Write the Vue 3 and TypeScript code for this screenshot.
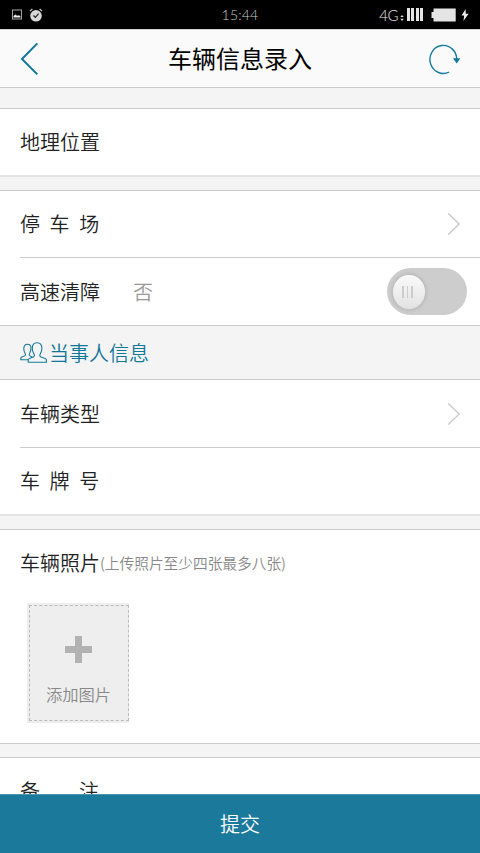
<script setup lang="ts">
import { ref } from 'vue'

const towing = ref<boolean>(false)
const signalBars: number[] = [0, 1, 2, 3]
</script>

<template>
  <div class="screen">
    <div class="status">
      <div class="status-side">
        <svg class="pic" width="12" height="12" viewBox="0 0 12 12">
          <rect x="0.5" y="1" width="9" height="9" fill="none" stroke="#a5a5a5" />
          <path d="M1.5 8.5V7L3.5 5.6L5 6.8L7 6.2L8.5 7.4V8.5Z" fill="#eee" />
        </svg>
        <svg class="alarm" width="14" height="14" viewBox="0 0 14 14">
          <circle cx="7" cy="7.8" r="5.8" fill="#d6d6d6" />
          <path d="M1 3L3.4 1M10.6 1L13 3" stroke="#bbb" stroke-width="1.3" />
          <path d="M4.4 7.5L6.4 9.3L9.6 5.7" fill="none" stroke="#222" stroke-width="1.2" />
        </svg>
      </div>
      <div class="clock">15:44</div>
      <div class="status-side right">
        <span class="net">4G</span>
        <svg class="data" width="4" height="6" viewBox="0 0 4 6"><path d="M0.3 2L2 0L3.7 2ZM0.3 3.8H3.7L2 6Z" fill="#ddd" /></svg>
        <span class="signal"><i v-for="bar in signalBars" :key="bar"></i></span>
        <svg class="battery" width="25" height="14" viewBox="0 0 25 14">
          <path d="M2.5 0.5H24.7V13.5H2.5V10H0.5V4H2.5Z" fill="#e4e4e4" />
        </svg>
        <svg class="bolt" width="8" height="12" viewBox="0 0 8 12"><path d="M4.7 0L0.5 6.6H3.2L2.4 12L7.6 4.7H4.7Z" fill="#eee" /></svg>
      </div>
    </div>

    <header class="header">
      <svg width="20" height="34" viewBox="0 0 20 34"><path d="M17.3 1.4L2 17L17.3 32.4" fill="none" stroke="#11779a" stroke-width="2" /></svg>
      <h1>车辆信息录入</h1>
      <svg class="refresh" width="34" height="32" viewBox="0 0 34 32">
        <path d="M21.2 29A13.4 14 0 1 1 28.7 17" fill="none" stroke="#147a9c" stroke-width="1.4" />
        <path d="M25 15.3H32.3L28.7 20.5Z" fill="#11779a" />
      </svg>
    </header>

    <main class="content">
      <div class="gap top"></div>
      <section class="group soft">
        <div class="row"><span class="label">地理位置</span></div>
      </section>
      <div class="gap"></div>
      <section class="group">
        <div class="row divided">
          <span class="label spread">停车场</span>
          <svg class="chevron" width="14" height="24" viewBox="0 0 14 24"><path d="M1.3 1.5L12.2 12L1.3 22.5" fill="none" stroke="#c8c8c8" stroke-width="1.3" /></svg>
        </div>
        <div class="row">
          <span class="label">高速清障</span>
          <span class="value">{{ towing ? '是' : '否' }}</span>
          <button class="switch" :class="{ on: towing }" @click="towing = !towing">
            <span class="knob"><i></i><i></i><i></i></span>
          </button>
        </div>
      </section>
      <div class="caption">
        <svg width="28" height="22" viewBox="0 0 28 22" fill="none" stroke="#13799b" stroke-width="1.1">
          <path d="M8 17.7H0.8V16C1.3 14.5 5.3 14.6 5.5 13C5.7 11.5 3.7 10.3 3.8 6.5C3.8 3.8 5.3 2.2 7.4 2.2C9.6 2.2 11 3.6 11 6" />
          <path d="M8.2 20.3V17.7C8.9 15.5 14 16 14.4 13.8C14.6 12 12.3 10.3 12.3 6.5C12.3 2.8 14 0.7 17 0.7C20 0.7 21.9 2.8 21.9 6.5C21.9 10.3 19.6 12 19.8 13.8C20.2 16 25.8 15.5 26.4 17.7V20.3Z" />
          <path d="M11 6C11 10.3 9 11.5 9.2 13C9.4 14.3 11.4 14.4 12.3 15" />
        </svg>
        <span>当事人信息</span>
      </div>
      <section class="group soft">
        <div class="row divided">
          <span class="label">车辆类型</span>
          <svg class="chevron" width="14" height="24" viewBox="0 0 14 24"><path d="M1.3 1.5L12.2 12L1.3 22.5" fill="none" stroke="#c8c8c8" stroke-width="1.3" /></svg>
        </div>
        <div class="row"><span class="label spread">车牌号</span></div>
      </section>
      <div class="gap"></div>
      <section class="group photos">
        <div class="row"><span class="label">车辆照片</span><span class="hint">(上传照片至少四张最多八张)</span></div>
        <div class="add">
          <div class="add-inner">
            <svg width="27" height="27" viewBox="0 0 27 27"><path d="M10 0H17V10H27V17H17V27H10V17H0V10H10Z" fill="#b2b2b2" /></svg>
            <span>添加图片</span>
          </div>
        </div>
      </section>
      <div class="gap"></div>
      <section class="group">
        <div class="row last"><span class="label wide">备注</span></div>
      </section>
    </main>
    <button class="submit">提交</button>
  </div>
</template>

<style>
body {
  overflow: hidden;
}
</style>

<style scoped>
.screen {
  box-sizing: border-box;
  width: 480px;
  height: 853px;
  display: flex;
  flex-direction: column;
  overflow: hidden;
  background: #f4f4f4;
  color: #222;
  font-family: "Noto Sans CJK SC", sans-serif;
  font-size: 20px;
  font-weight: 350;
}
svg {
  display: block;
  flex: none;
}
.status {
  flex: none;
  height: 29px;
  display: grid;
  grid-template-columns: 1fr auto 1fr;
  align-items: center;
  background: #000;
  color: #ccc;
}
.status-side {
  display: flex;
  align-items: center;
  padding-left: 12px;
}
.alarm {
  margin-left: 5px;
}
.clock {
  font-family: Lato, sans-serif;
  font-weight: 300;
  font-size: 14px;
  letter-spacing: 0.2px;
}
.right {
  justify-content: flex-end;
  padding: 0 11px 0 0;
}
.net {
  font-family: Lato, sans-serif;
  font-size: 15px;
  line-height: 20px;
  letter-spacing: -0.5px;
  color: #eee;
}
.data {
  margin: 7px 3px 0 1.5px;
}
.signal {
  display: flex;
  gap: 1.5px;
}
.signal i {
  width: 3px;
  height: 13px;
  background: #e4e4e4;
}
.battery {
  margin: 0 5px 0 8px;
}
.header {
  box-sizing: border-box;
  flex: none;
  height: 59px;
  display: flex;
  align-items: center;
  justify-content: space-between;
  padding: 0 18px 0 20px;
  background: #fafafa;
  border-top: 1px solid #d0d0d0;
  border-bottom: 1px solid #ccc;
}
h1 {
  margin: -2px 0 0 12px;
  font-size: 24px;
  font-weight: 400;
  line-height: 36px;
  color: #000;
}
.content {
  flex: 1;
  min-height: 0;
  overflow: hidden;
}
.gap {
  height: 13px;
}
.gap.top {
  height: 20px;
}
.group {
  background: #fff;
  border-top: 1px solid #ccc;
  border-bottom: 1px solid #ccc;
}
.soft {
  border-bottom: 2px solid #e3e3e3;
}
.row {
  box-sizing: border-box;
  height: 67px;
  display: flex;
  align-items: center;
  margin-left: 20px;
  padding-right: 13px;
}
.soft .row:last-child {
  height: 66px;
}
.row.divided {
  border-bottom: 1px solid #ccc;
}
.soft .row.divided {
  height: 68px;
}
.label {
  flex: none;
  line-height: 30px;
}
.spread {
  letter-spacing: 9.6px;
}
.wide {
  letter-spacing: 39px;
}
.value {
  margin-left: 33px;
  color: #999;
}
.chevron {
  margin-left: auto;
  margin-right: 6px;
}
.switch {
  box-sizing: border-box;
  width: 80px;
  height: 47px;
  margin-left: auto;
  padding: 0 6px;
  display: flex;
  align-items: center;
  border: 0;
  border-radius: 24px;
  background: #cdcdcd;
}
.switch.on {
  justify-content: flex-end;
}
.knob {
  box-sizing: border-box;
  width: 32px;
  height: 34px;
  padding-right: 3px;
  display: flex;
  align-items: center;
  justify-content: center;
  gap: 3px;
  border-radius: 50%;
  background: linear-gradient(#fafafa, #e2e2e2);
  box-shadow: 0 0 3px 2px #bdbdbd;
}
.knob i {
  width: 1.5px;
  height: 12px;
  background: #ccc;
}
.caption {
  height: 53px;
  display: flex;
  align-items: center;
  gap: 1px;
  padding-left: 20px;
  color: #11779a;
}
.photos {
  height: 213px;
}
.photos .row {
  height: 65px;
}
.hint {
  font-size: 14.7px;
  color: #888;
}
.add {
  box-sizing: border-box;
  width: 102px;
  height: 120px;
  margin: 8px 0 0 26.5px;
  padding: 2px 0 2px 2px;
  background: #eee;
}
.add-inner {
  box-sizing: border-box;
  height: 116px;
  display: flex;
  flex-direction: column;
  align-items: center;
  padding-top: 30px;
  border: 1px dashed #bbb;
  font-size: 16.3px;
  line-height: 24px;
  color: #888;
}
.add-inner span {
  margin-top: 19px;
}
.row.last {
  height: 66px;
}
.submit {
  box-sizing: border-box;
  flex: none;
  height: 59px;
  padding: 0 0 2px;
  border: 0;
  border-top: 1px solid #4b96b1;
  background: #1b7a9c;
  color: #fff;
  font: inherit;
}
</style>
